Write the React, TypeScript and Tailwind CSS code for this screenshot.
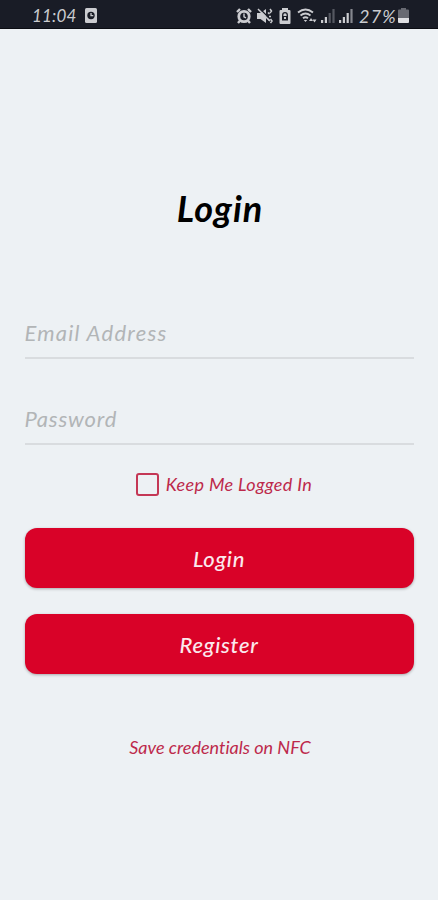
import React from "react";

function Field({ label, type, className }: { label: string; type: string; className: string }) {
  return (
    <input
      type={type}
      placeholder={label}
      className={`block h-[51px] w-full border-b-2 border-[#d9dcdf] bg-transparent pb-[1px] text-[22px] italic text-[#444] outline-none placeholder:text-[#b2b5b7] placeholder:opacity-100 ${className}`}
    />
  );
}

function ActionButton({ children, className }: { children: React.ReactNode; className: string }) {
  return (
    <button
      className={`flex h-[60px] w-full items-center justify-center rounded-[12px] bg-[#d90228] text-[22px] font-medium italic text-[#fbe9ed] shadow-[0_1px_3px_rgba(0,0,0,0.3)] ${className}`}
    >
      {children}
    </button>
  );
}

function StatusBar() {
  return (
    <header className="flex h-[29px] items-center border-b border-[#0b0d13] bg-[#191c26] pl-[32px] pr-[29px] pt-[3px] text-[#cbccd0]">
      <span className="w-[45px] whitespace-nowrap text-[17px] italic leading-none tracking-[0.2px]">11:04</span>
      <svg className="ml-[8px]" width="12" height="15" viewBox="0 0 12 15">
        <rect width="12" height="15" rx="1.5" fill="#cbccd0" />
        <circle cx="6" cy="7.5" r="3.7" fill="#191c26" />
        <path d="M6 5v2.6h2.3" stroke="#cbccd0" strokeWidth="1.3" fill="none" />
      </svg>
      <div className="ml-auto flex items-center">
        <svg width="16" height="16" viewBox="0 0 16 16" fill="none" stroke="#cbccd0">
          <circle cx="8" cy="8.5" r="5.2" strokeWidth="2.8" />
          <path d="M1 4 4 1M12 1l3 3M3.8 13 2 15M12.2 13l1.8 2" strokeWidth="2.4" />
          <path d="M8 5.5v3.4l2 1" strokeWidth="1.4" />
        </svg>
        <svg className="ml-[5px]" width="16" height="16" viewBox="0 0 16 16" fill="#cbccd0">
          <path d="M0 5h3.5L9 1v14l-5.500-4H0z" />
          <path d="M2 0l13 13" stroke="#191c26" strokeWidth="1.4" />
          <path d="M1 1l12 12" stroke="#cbccd0" strokeWidth="1.5" />
          <path d="M11 4.500 12.500 6M12 8.500h2M11 11l1.500 1.500M13 1l1.500 2-1.500 2M13.500 11l1.500 2-1.500 2" stroke="#cbccd0" strokeWidth="1.500" fill="none" />
        </svg>
        <svg className="ml-[6px]" width="12" height="16" viewBox="0 0 12 16">
          <path d="M3 0h6v2h1.500q1 0 1 1v12q0 1-1 1h-9q-1 0-1-1V3q0-1 1-1H3z" fill="#cbccd0" />
          <path d="M3.700 8V7a2.300 2.300 0 0 1 4.600 0v1" stroke="#191c26" strokeWidth="1.300" fill="none" />
          <path d="M3 8h6v4.500H3z" fill="#191c26" />
          <path d="M5 9h2v2H5z" fill="#cbccd0" />
        </svg>
        <svg className="ml-[6px]" width="21" height="16" viewBox="0 0 21 16" fill="none" stroke="#cbccd0" strokeWidth="1.900">
          <path d="M1 4.500q7.500-6 15 0M3.500 7.500q5-4 10 0M6 10.300q2.500-2 5 0" />
          <path d="m8.500 14-1.700-2h3.400z" fill="#cbccd0" stroke="none" />
          <path d="m12 13 2-3 2 3zM15.500 11.500h4l-2 3z" fill="#cbccd0" stroke="none" />
        </svg>
        <svg className="ml-[3px]" width="14" height="15" viewBox="0 0 14 15">
          <path d="M0 12h2.200v3H0zM3.800 9H6v6H3.800z" fill="#cbccd0" />
          <path d="M7.600 5h2.200v10H7.600zM11.400 1h2.200v14h-2.200z" fill="#555861" />
        </svg>
        <svg className="ml-[4px]" width="14" height="15" viewBox="0 0 14 15">
          <path d="M0 12h2.200v3H0zM3.800 9H6v6H3.800zM7.600 5h2.200v10H7.600z" fill="#cbccd0" />
          <path d="M11.400 1h2.200v14h-2.200z" fill="#85878e" />
        </svg>
        <span className="ml-[6px] w-[39px] whitespace-nowrap text-[18px] italic leading-none tracking-[1.2px]">27%</span>
        <svg width="11" height="15" viewBox="0 0 11 15">
          <path d="M3 0h5v1.500h2q1 0 1 1V10H0V2.500q0-1 1-1h2z" fill="#686a72" />
          <path d="M0 10h11v4q0 1-1 1H1q-1 0-1-1z" fill="#dedfe2" />
        </svg>
      </div>
    </header>
  );
}

export default function App() {
  return (
    <div className="h-[900px] w-full overflow-hidden bg-[#edf1f4] font-['Lato','Open_Sans',sans-serif]">
      <StatusBar />
      <main className="flex flex-col items-center px-[24.500px]">
        <h1 className="mt-[155px] h-[49px] whitespace-nowrap pl-[2px] text-[36px] font-bold italic leading-[48px] tracking-[1px] text-black">Login</h1>
        <Field label="Email Address" type="email" className="mt-[75px] tracking-[1.25px]" />
        <Field label="Password" type="password" className="mt-[35px] tracking-[0.8px]" />
        <label className="mt-[27px] flex h-[24px] items-center pl-[10px] text-[#bd294b] max-w-none">
          <input type="checkbox" className="h-[23px] w-[23px] appearance-none rounded-[3px] border-[2.500px] border-[#c43755]" />
          <span className="ml-[7px] whitespace-nowrap text-[18px] italic leading-6 tracking-[0.35px]">Keep Me Logged In</span>
        </label>
        <ActionButton className="mt-[32px] tracking-[0.7px]">Login</ActionButton>
        <ActionButton className="mt-[26px] tracking-[0.7px]">Register</ActionButton>
        <a className="mt-[61px] whitespace-nowrap pl-[2px] text-[18px] italic leading-6 tracking-[0.010px] text-[#bd294b]">Save credentials on NFC</a>
      </main>
    </div>
  );
}
